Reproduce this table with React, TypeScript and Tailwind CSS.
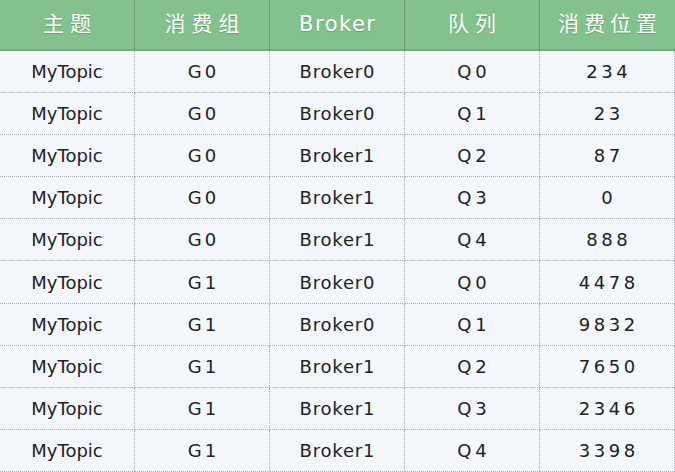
const headers = ["主题", "消费组", "Broker", "队列", "消费位置"];

const rows = [
  ["MyTopic", "G0", "Broker0", "Q0", "234"],
  ["MyTopic", "G0", "Broker0", "Q1", "23"],
  ["MyTopic", "G0", "Broker1", "Q2", "87"],
  ["MyTopic", "G0", "Broker1", "Q3", "0"],
  ["MyTopic", "G0", "Broker1", "Q4", "888"],
  ["MyTopic", "G1", "Broker0", "Q0", "4478"],
  ["MyTopic", "G1", "Broker0", "Q1", "9832"],
  ["MyTopic", "G1", "Broker1", "Q2", "7650"],
  ["MyTopic", "G1", "Broker1", "Q3", "2346"],
  ["MyTopic", "G1", "Broker1", "Q4", "3398"],
];

const headTracking = [
  "tracking-[6px] pl-[6px]",
  "tracking-[6px] pl-[6px]",
  "tracking-[1.5px] pl-[1.5px]",
  "tracking-[6px] pl-[6px]",
  "tracking-[5px] pl-[5px]",
];

const cellTracking = [
  "tracking-[0px]",
  "tracking-[3px] pl-[3px]",
  "tracking-[0.8px] pl-[0.8px]",
  "tracking-[4px] pl-[4px]",
  "tracking-[3.5px] pl-[3.5px]",
];

export default function App() {
  return (
    <div
      className="h-[472px] w-[675px] overflow-hidden bg-[#f3f6fa]"
      style={{ fontFamily: '"DejaVu Sans", "Noto Sans CJK SC", sans-serif' }}
    >
      <div className="grid h-[51px] grid-cols-5 bg-[#83c28e] text-[21px] text-white [text-shadow:0_1px_1px_rgba(0,0,0,0.2)]">
        {headers.map((h, i) => (
          <div
            key={h}
            className={`flex items-center justify-center border-b-2 border-[#6fa87a] ${headTracking[i]} ${
              i < 4 ? "border-r border-r-[#6a9e74]" : ""
            }`}
          >
            {h}
          </div>
        ))}
      </div>
      {rows.map((row, r) => (
        <div key={r} className="grid h-[42.1px] grid-cols-5 text-[18px] text-[#222]">
          {row.map((cell, c) => (
            <div
              key={c}
              className={`flex items-center justify-center border-r border-b border-dotted border-[#a8adb3] ${cellTracking[c]}`}
            >
              {cell}
            </div>
          ))}
        </div>
      ))}
    </div>
  );
}
